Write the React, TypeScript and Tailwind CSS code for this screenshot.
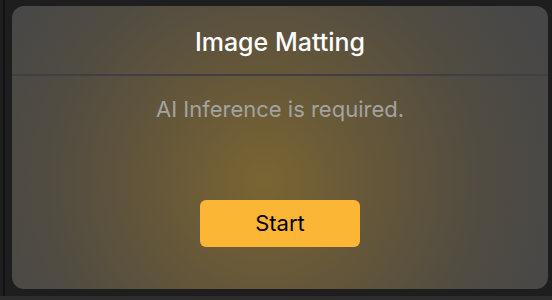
export default function App() {
  return (
    <div className="w-[552px] h-[300px] flex flex-col bg-[#1e1e1e] font-['Inter','Liberation_Sans',sans-serif]">
      <div className="flex h-[296px]">
        {/* left edge of the host window */}
        <div className="w-[3px] bg-[#1f1f1f]" />
        <div className="w-[2px] bg-[#131313]" />
        <div className="w-[7px] bg-[#1e1e1e]" />

        {/* DIALOG */}
        <div className="mt-[6px] mb-[7px] w-[536px] rounded-[12px] overflow-hidden flex flex-col bg-[radial-gradient(ellipse_58%_110%_at_47%_62%,#7a6532_0%,#655739_35%,#514c42_70%,#474747_100%)]">
          <div className="h-[68px] flex items-center justify-center pt-[5px]">
            <h1 className="text-[25px] font-medium text-white">Image Matting</h1>
          </div>
          <div className="h-[2px] bg-[#3f3f44]" />
          <p className="mt-[19px] text-center text-[22px] text-[#a3a3a0] leading-[28px]">
            AI Inference is required.
          </p>
          <div className="mt-[77px] flex justify-center">
            <button className="w-[160px] h-[47px] rounded-[6px] bg-[#fbb636] text-black text-[22px] font-normal">
              Start
            </button>
          </div>
        </div>
        <div className="flex-1" />
      </div>
      <div className="h-[4px] bg-[#2d2d2d]" />
    </div>
  )
}
